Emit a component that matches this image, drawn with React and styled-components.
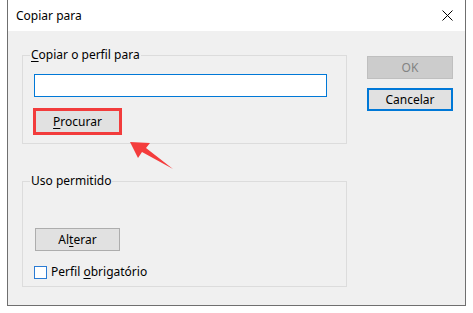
import React from "react";
import styled, { createGlobalStyle } from "styled-components";

const GlobalStyle = createGlobalStyle`
  html, body { margin: 0; padding: 0; background: #ffffff; }
  body {
    font-family: "Segoe UI", "Noto Sans", "Liberation Sans", sans-serif;
    font-size: 12px;
    color: #000;
  }
`;

const Window = styled.div`
  position: relative;
  margin-left: 7px;
  width: 459px;
  height: 306px;
  box-sizing: border-box;
  border: 1px solid #6f6f6f;
  border-top: none;
  background: #f0f0f0;
  display: flex;
  flex-direction: column;
`;

const TitleBar = styled.div`
  height: 31px;
  flex: none;
  background: #ffffff;
  display: flex;
  align-items: center;
  justify-content: space-between;
  padding: 0 12px 0 8px;
  box-sizing: border-box;
  font-size: 12px;
  line-height: 16px;
`;

const CloseButton = styled.div`
  width: 12px;
  height: 12px;
  display: flex;
  align-items: center;
  justify-content: center;
`;

const Body = styled.div`
  display: flex;
  gap: 20px;
  padding: 16px 13px 0 14px;
`;

const LeftCol = styled.div`
  width: 325px;
  display: flex;
  flex-direction: column;
  gap: 29px;
`;

const Group = styled.fieldset`
  margin: 0;
  padding: 0;
  border: 1px solid #dcdcdc;
  min-width: 0;
`;

const Legend = styled.legend`
  margin-left: 7px;
  padding: 0 1px;
  line-height: 16px;
  font-size: 12px;
`;

const GroupBody = styled.div`
  display: flex;
  flex-direction: column;
  align-items: flex-start;
  padding: ${(p) => p.$pad};
`;

const TextInput = styled.input`
  width: 293px;
  height: 23px;
  box-sizing: border-box;
  border: 1px solid #0078d7;
  background: #fff;
  outline: none;
  margin: 0;
`;

const Button = styled.button`
  width: ${(p) => p.$w || 85}px;
  height: 23px;
  box-sizing: border-box;
  margin: ${(p) => p.$m || 0};
  padding: 0;
  font-family: inherit;
  font-size: 12px;
  line-height: 16px;
  color: ${(p) => (p.disabled ? "#838383" : "#000")};
  background: ${(p) => (p.disabled ? "#cccccc" : "#e1e1e1")};
  border: ${(p) =>
    p.$default ? "2px solid #0078d7" : p.disabled ? "1px solid #bfbfbf" : "1px solid #adadad"};
  outline: ${(p) => (p.$highlight ? "3px solid #f23c3c" : "none")};
  outline-offset: -1px;
`;

const RightCol = styled.div`
  display: flex;
  flex-direction: column;
  gap: 9px;
  padding-top: 9px;
`;

const Mn = styled.u`
  text-decoration: underline;
  text-underline-offset: 2px;
`;

const CheckRow = styled.label`
  display: flex;
  align-items: center;
  gap: 4px;
  height: 16px;
  line-height: 16px;
  margin-top: 13px;
`;

const CheckBox = styled.span`
  width: 13px;
  height: 13px;
  box-sizing: border-box;
  border: 1px solid #2a7bd4;
  background: #fff;
  flex: none;
`;

const Arrow = styled.svg`
  position: absolute;
  left: 120px;
  top: 138px;
  pointer-events: none;
`;

export default function App() {
  return (
    <>
      <GlobalStyle />
      <Window>
        <TitleBar>
          <span>Copiar para</span>
          <CloseButton>
            <svg width="11" height="11" viewBox="0 0 11 11">
              <path d="M0.5 0.5 L10.5 10.5 M10.5 0.5 L0.5 10.5" stroke="#000" strokeWidth="1" fill="none" />
            </svg>
          </CloseButton>
        </TitleBar>
        <Body>
          <LeftCol>
            <Group>
              <Legend>
                <Mn>C</Mn>opiar o perfil para
              </Legend>
              <GroupBody $pad="11px 19px 10px 11px">
                <TextInput type="text" />
                <Button $highlight $m="13px 0 0 1px">
                  <Mn>P</Mn>rocurar
                </Button>
              </GroupBody>
            </Group>
            <Group>
              <Legend>Uso permitido</Legend>
              <GroupBody $pad="39px 19px 6px 11px">
                <Button $m="0 0 0 1px">
                  Al<Mn>t</Mn>erar
                </Button>
                <CheckRow>
                  <CheckBox />
                  <span>
                    Perfil <Mn>o</Mn>brigatório
                  </span>
                </CheckRow>
              </GroupBody>
            </Group>
          </LeftCol>
          <RightCol>
            <Button $w={86} disabled>
              OK
            </Button>
            <Button $w={86} $default>
              Cancelar
            </Button>
          </RightCol>
        </Body>
        <Arrow width="56" height="36" viewBox="120 138 56 36">
          <polygon
            points="122,142 142,143 138,148 165,169 134,152 130,158"
            fill="#f43c3c"
          />
        </Arrow>
      </Window>
    </>
  );
}
